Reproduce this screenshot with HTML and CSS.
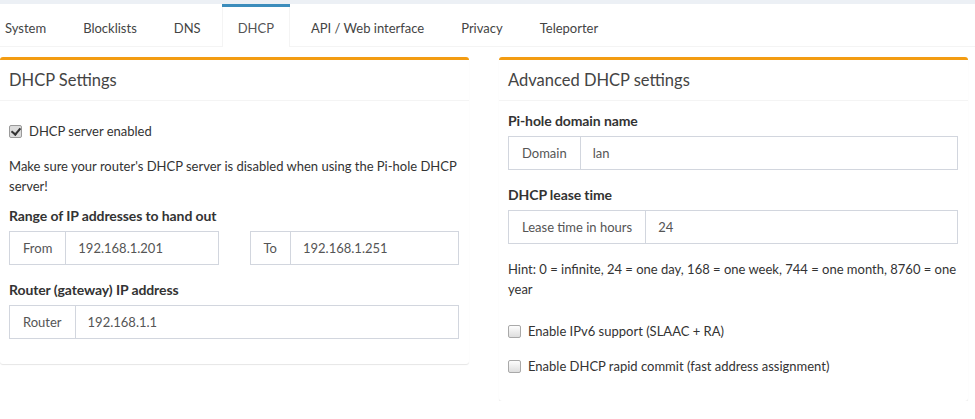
FILE: index.html
```html
<!DOCTYPE html>
<html lang="en">
<head>
    <meta charset="UTF-8">
    <meta name="viewport" content="width=device-width, initial-scale=1.0">
    <title>Settings - DHCP</title>
    <link rel="stylesheet" href="styles.css">
</head>
<body>
    <ul class="tabs">
        <li><a href="#">System</a></li>
        <li><a href="#">Blocklists</a></li>
        <li><a href="#">DNS</a></li>
        <li class="active"><a href="#">DHCP</a></li>
        <li><a href="#">API / Web interface</a></li>
        <li><a href="#">Privacy</a></li>
        <li><a href="#">Teleporter</a></li>
    </ul>
    <div class="content">
        <div class="box">
            <div class="box-header">
                <h3 class="box-title">DHCP Settings</h3>
            </div>
            <div class="box-body">
                <div class="form-group">
                    <div class="checkbox">
                        <label><input type="checkbox" checked> DHCP server enabled</label>
                    </div>
                </div>
                <p>Make sure your router's DHCP server is disabled when using the Pi-hole DHCP server!</p>
                <label class="field-label">Range of IP addresses to hand out</label>
                <div class="form-group range">
                    <div class="input-group">
                        <span class="addon">From</span>
                        <input class="input" type="text" value="192.168.1.201">
                    </div>
                    <div class="input-group">
                        <span class="addon">To</span>
                        <input class="input" type="text" value="192.168.1.251">
                    </div>
                </div>
                <label class="field-label">Router (gateway) IP address</label>
                <div class="form-group">
                    <div class="input-group">
                        <span class="addon">Router</span>
                        <input class="input" type="text" value="192.168.1.1">
                    </div>
                </div>
            </div>
        </div>
        <div class="box">
            <div class="box-header">
                <h3 class="box-title">Advanced DHCP settings</h3>
            </div>
            <div class="box-body">
                <label class="field-label">Pi-hole domain name</label>
                <div class="form-group">
                    <div class="input-group">
                        <span class="addon">Domain</span>
                        <input class="input" type="text" value="lan">
                    </div>
                </div>
                <label class="field-label">DHCP lease time</label>
                <div class="form-group">
                    <div class="input-group">
                        <span class="addon">Lease time in hours</span>
                        <input class="input" type="text" value="24">
                    </div>
                </div>
                <p>Hint: 0 = infinite, 24 = one day, 168 = one week, 744 = one month, 8760 = one year</p>
                <div class="form-group after-hint">
                    <div class="checkbox">
                        <label><input type="checkbox"> Enable IPv6 support (SLAAC + RA)</label>
                    </div>
                </div>
                <div class="form-group">
                    <div class="checkbox">
                        <label><input type="checkbox"> Enable DHCP rapid commit (fast address assignment)</label>
                    </div>
                </div>
            </div>
        </div>
    </div>
</body>
</html>
```

FILE: styles.css
```css
body {
    margin: 0;
    font-family: Lato, "Open Sans", sans-serif;
    font-size: 13px;
    line-height: 20px;
    color: #333;
    background-color: #fff;
}
.tabs {
    display: flex;
    list-style: none;
    margin: 0;
    padding: 0;
    background-color: #fff;
    border-top: 4px solid #ecf0f5;
    border-bottom: 1px solid #f4f4f4;
}
.tabs li {
    margin-right: 5px;
    margin-bottom: -1px;
    border-top: 3px solid transparent;
}
.tabs li:first-child {
    margin-left: -11px;
}
.tabs li a {
    display: block;
    padding: 11px 15px 9px;
    color: #444;
    text-decoration: none;
    border-left: 1px solid transparent;
    border-right: 1px solid transparent;
}
.tabs li.active {
    border-top-color: #3c8dbc;
}
.tabs li.active a {
    background-color: #fff;
    color: #555;
    border-left-color: #f4f4f4;
    border-right-color: #f4f4f4;
}
.content {
    display: grid;
    grid-template-columns: 469px 469px;
    column-gap: 30px;
    align-items: start;
    padding-top: 10px;
}
.box {
    background-color: #fff;
    border-top: 3px solid #f39c12;
    border-radius: 3px;
    box-shadow: 0 1px 1px rgba(0, 0, 0, 0.1);
}
.box-header {
    padding: 10px 9px;
    border-bottom: 1px solid #f4f4f4;
}
.box-title {
    margin: 0;
    font-size: 16.5px;
    font-weight: normal;
    line-height: 20px;
    color: #444;
}
.box-body {
    padding: 10px 10px 10px 9px;
}
p {
    margin: 0 0 10px;
}
.field-label {
    display: block;
    font-size: 14px;
    font-weight: bold;
    letter-spacing: -0.1px;
    margin-bottom: 5px;
}
.form-group {
    margin-bottom: 15px;
}
.after-hint {
    margin-top: 22px;
}
.checkbox {
    margin: 10px 0;
}
.checkbox label {
    display: flex;
    align-items: center;
}
.checkbox input {
    appearance: none;
    position: relative;
    width: 13px;
    height: 13px;
    margin: 0 7px 0 0;
    border: 1px solid #a9a9a9;
    border-radius: 2px;
    background: linear-gradient(#fdfdfd, #dedede);
}
.checkbox input:checked {
    background: #dcdcdc;
    border-color: #9a9a9a;
}
.checkbox input:checked::after {
    content: "";
    position: absolute;
    left: 3px;
    top: 0;
    width: 4px;
    height: 7px;
    border: solid #333;
    border-width: 0 2px 2px 0;
    transform: rotate(40deg);
}
.range {
    display: grid;
    grid-template-columns: minmax(0, 1fr) minmax(0, 1fr);
    column-gap: 31px;
}
.input-group {
    display: flex;
    height: 34px;
    border: 1px solid #d2d6de;
    box-sizing: border-box;
}
.addon {
    display: flex;
    align-items: center;
    padding: 0 13px;
    color: #555;
    border-right: 1px solid #d2d6de;
}
.input {
    flex: 1;
    min-width: 0;
    border: 0;
    padding: 0 12px;
    font-family: inherit;
    font-size: 13px;
    color: #555;
    outline: none;
}
```
